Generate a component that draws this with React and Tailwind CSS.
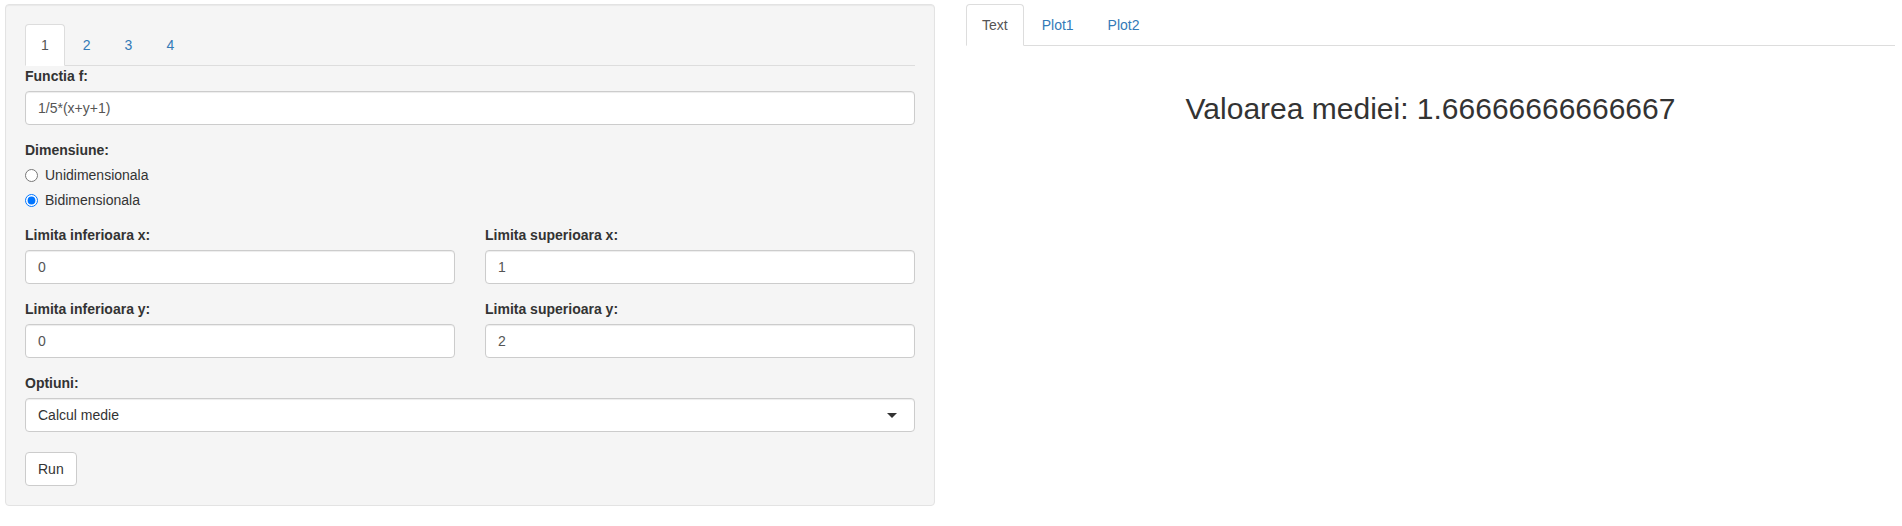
import { useState } from "react";

const inputCls =
  "block w-full h-[34px] px-[12px] py-[6px] bg-white border border-[#ccc] rounded-[4px] shadow-[inset_0_1px_1px_rgba(0,0,0,0.075)] text-[14px] leading-[20px] text-[#555] outline-none";

function Tabs({ items, active, onPick }) {
  return (
    <ul className="flex border-b border-[#ddd]">
      {items.map((t) => (
        <li key={t} className="mr-[2px] -mb-px">
          <button
            onClick={() => onPick(t)}
            className={
              t === active
                ? "block px-[15px] py-[10px] leading-[20px] bg-white border border-[#ddd] border-b-transparent rounded-t-[4px] text-[#555]"
                : "block px-[15px] py-[10px] leading-[20px] border border-transparent rounded-t-[4px] text-[#337ab7]"
            }
          >
            {t}
          </button>
        </li>
      ))}
    </ul>
  );
}

function Field({ label, value }) {
  return (
    <div className="mb-[15px]">
      <label className="block mb-[5px] font-bold leading-[20px] text-[#333]">
        {label}
      </label>
      <input className={inputCls} defaultValue={value} />
    </div>
  );
}

function App() {
  const [tab, setTab] = useState("1");
  const [outTab, setOutTab] = useState("Text");
  const [dim, setDim] = useState("bi");

  return (
    <main className="w-screen min-h-[526px] bg-white flex gap-[31px] pl-[5px] pr-[7px] pt-[4px] font-['Liberation_Sans',Arial,sans-serif] text-[14px] leading-[20px] text-[#333]">
      {/* sidebar */}
      <div className="w-[930px] shrink-0 self-start bg-[#f5f5f5] border border-[#e3e3e3] rounded-[4px] shadow-[inset_0_1px_1px_rgba(0,0,0,0.05)] p-[19px]">
        <Tabs items={["1", "2", "3", "4"]} active={tab} onPick={setTab} />

        <Field label="Functia f:" value="1/5*(x+y+1)" />

        <div className="mb-[15px]">
          <label className="block mb-[5px] font-bold text-[#333]">
            Dimensiune:
          </label>
          <label className="relative block pl-[20px] leading-[20px]">
            <input
              type="radio"
              name="dim"
              checked={dim === "uni"}
              onChange={() => setDim("uni")}
              className="absolute left-0 top-[4px] m-0 w-[13px] h-[13px]"
            />
            Unidimensionala
          </label>
          <label className="relative block pl-[20px] mt-[5px] leading-[20px]">
            <input
              type="radio"
              name="dim"
              checked={dim === "bi"}
              onChange={() => setDim("bi")}
              className="absolute left-0 top-[4px] m-0 w-[13px] h-[13px]"
            />
            Bidimensionala
          </label>
        </div>

        <div className="grid grid-cols-2 gap-x-[30px]">
          <Field label="Limita inferioara x:" value="0" />
          <Field label="Limita superioara x:" value="1" />
          <Field label="Limita inferioara y:" value="0" />
          <Field label="Limita superioara y:" value="2" />
        </div>

        <div className="mb-[20px]">
          <label className="block mb-[5px] font-bold text-[#333]">Optiuni:</label>
          <div className="flex items-center justify-between h-[34px] px-[12px] bg-white border border-[#ccc] rounded-[4px] shadow-[inset_0_1px_1px_rgba(0,0,0,0.075)] text-[#333]">
            <span>Calcul medie</span>
            <span className="mr-[5px] w-0 h-0 border-x-[5px] border-t-[5px] border-x-transparent border-t-[#333]" />
          </div>
        </div>

        <button className="h-[34px] px-[12px] bg-white border border-[#ccc] rounded-[4px] text-[#333]">
          Run
        </button>
      </div>

      {/* output */}
      <div className="flex-1">
        <Tabs items={["Text", "Plot1", "Plot2"]} active={outTab} onPick={setOutTab} />
        {outTab === "Text" && (
          <h2 className="mt-[46px] text-center text-[30px] leading-[33px] font-normal text-[#333]">
            Valoarea mediei: 1.66666666666667
          </h2>
        )}
      </div>
    </main>
  );
}

export default App;
